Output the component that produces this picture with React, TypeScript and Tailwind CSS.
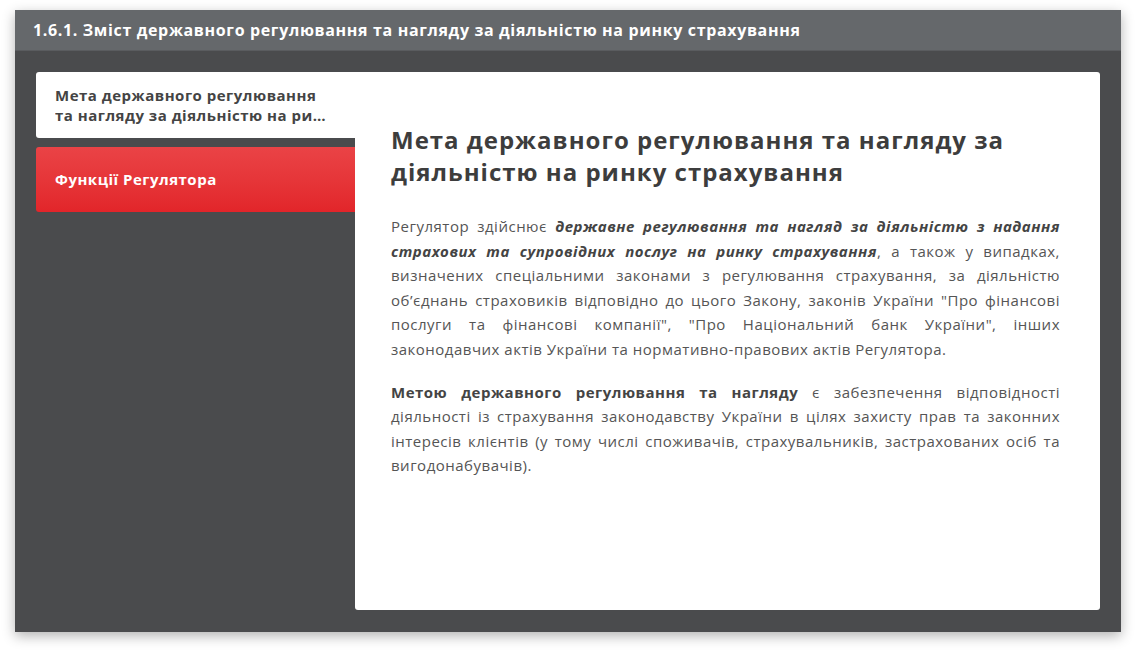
export default function App() {
  return (
    <div className="w-[1136px] h-[653px] bg-white pt-[10px] pl-[15px]" style={{ fontFamily: '"Open Sans", "Liberation Sans", sans-serif' }}>
      <div className="w-[1106px] h-[622px] bg-[#4a4b4d] shadow-[0_4px_12px_rgba(0,0,0,0.3)] flex flex-col">
        <div className="h-[41px] bg-[#65686b] flex items-center px-[18px] text-white font-bold text-[16px] tracking-[0.65px] border-b border-[#5a5c5f]">
          1.6.1. Зміст державного регулювання та нагляду за діяльністю на ринку страхування
        </div>
        <div className="flex flex-1 px-[21px] pt-[21px] pb-[22px]">
          <div className="w-[319px] flex flex-col gap-[9px] shrink-0">
            <div className="h-[66px] bg-white rounded-l-[3px] flex flex-col justify-center pl-[19px] pr-[24px] text-[15px] leading-[20px] font-bold tracking-[0.5px] text-[#444]">
              <span className="whitespace-nowrap">Мета державного регулювання</span>
              <span className="whitespace-nowrap overflow-hidden text-ellipsis">та нагляду за діяльністю на ринку страхування</span>
            </div>
            <div className="h-[65px] rounded-l-[3px] bg-gradient-to-b from-[#ea4346] to-[#e2252a] flex items-center pl-[19px] text-[15px] font-bold tracking-[0.5px] text-white">
              Функції Регулятора
            </div>
          </div>
          <div className="flex-1 bg-white rounded-r-[3px] rounded-bl-[3px] pl-[36px] pr-[40px] pt-[52px]">
            <h1 className="text-[24px] leading-[32px] font-bold tracking-[1px] text-[#3d3d3d] mb-[26px]">
              Мета державного регулювання та нагляду за діяльністю на ринку страхування
            </h1>
            <p className="text-[15px] leading-[24.6px] tracking-[0.5px] text-[#555] text-justify mb-[18px]">
              Регулятор здійснює <b className="italic text-[#444]">державне регулювання та нагляд за діяльністю з надання страхових та супровідних послуг на ринку страхування</b>, а також у випадках, визначених спеціальними законами з регулювання страхування, за діяльністю об’єднань страховиків відповідно до цього Закону, законів України "Про фінансові послуги та фінансові компанії", "Про Національний банк України", інших законодавчих актів України та нормативно-правових актів Регулятора.
            </p>
            <p className="text-[15px] leading-[24.6px] tracking-[0.5px] text-[#555] text-justify">
              <b className="text-[#444]">Метою державного регулювання та нагляду</b> є забезпечення відповідності діяльності із страхування законодавству України в цілях захисту прав та законних інтересів клієнтів (у тому числі споживачів, страхувальників, застрахованих осіб та вигодонабувачів).
            </p>
          </div>
        </div>
      </div>
    </div>
  );
}
